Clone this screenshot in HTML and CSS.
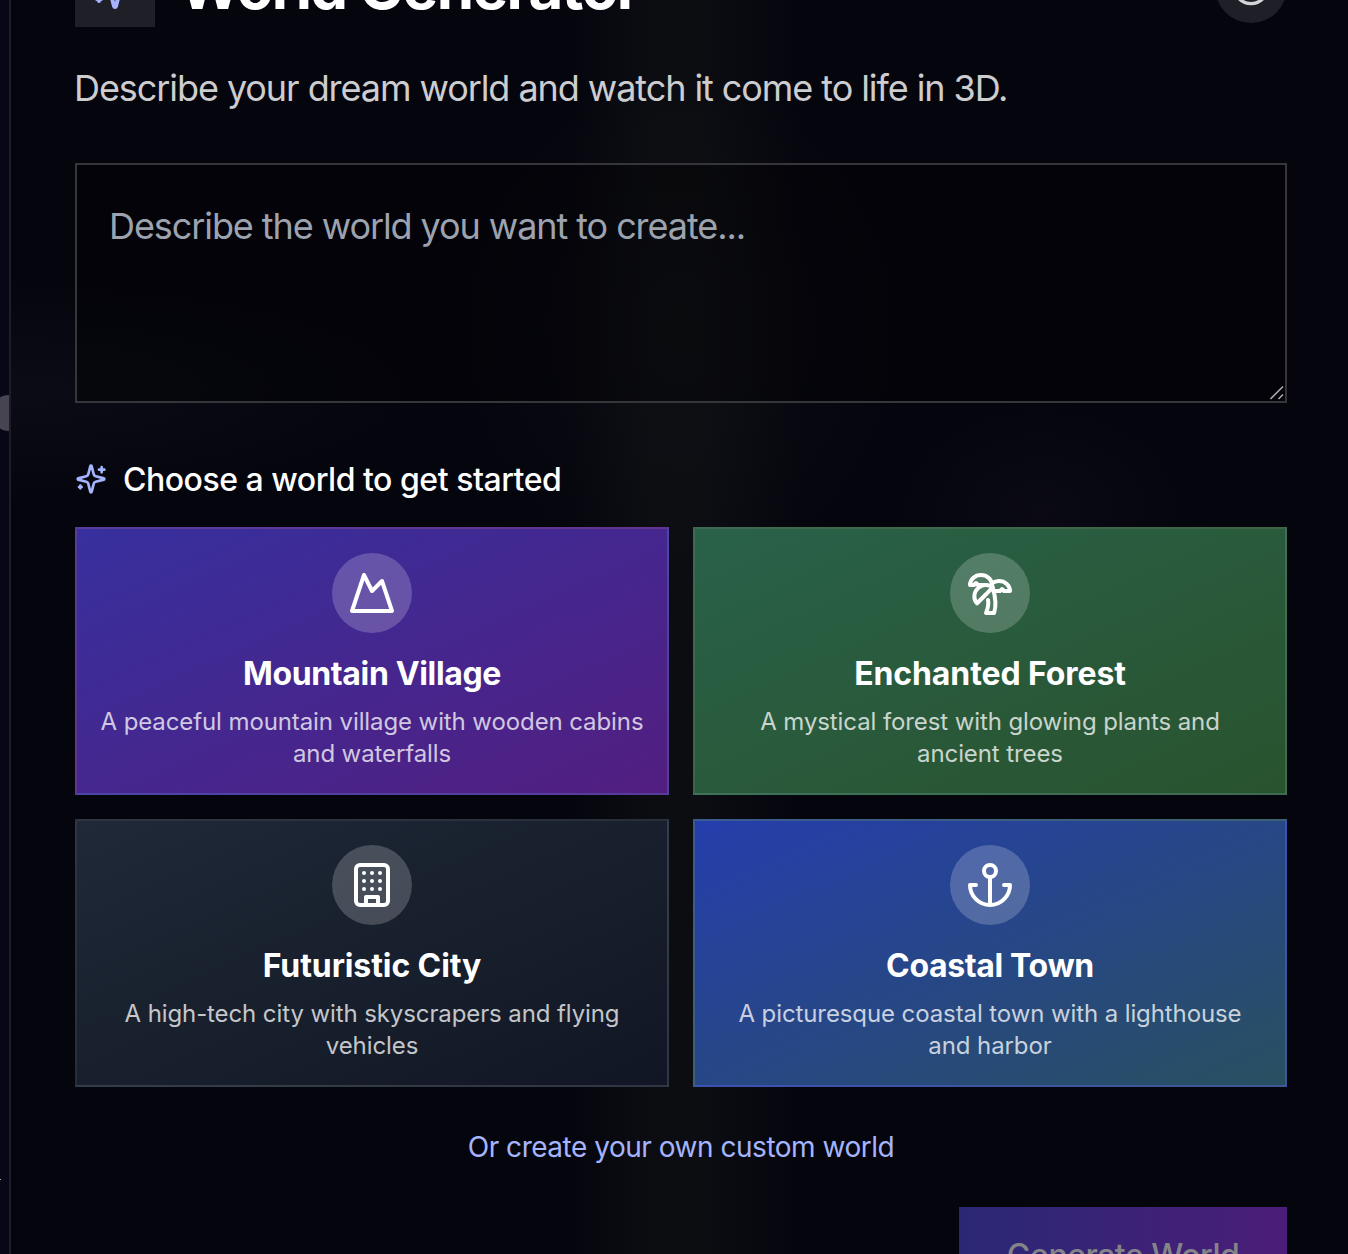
FILE: index.html
```html
<!DOCTYPE html>
<html lang="en">
<head>
<meta charset="utf-8">
<title>World Generator</title>
<link rel="stylesheet" href="styles.css">
</head>
<body>
<div class="app">
  <div class="backdrop">
    <span class="orb"></span>
    <span class="fleck"></span>
  </div>
  <main class="panel">
    <header class="header">
      <div class="logo">
        <svg class="icon" width="48" height="48" viewBox="0 0 24 24"><path d="M9.937 15.5A2 2 0 0 0 8.5 14.063l-6.135-1.582a.5.5 0 0 1 0-.962L8.5 9.936A2 2 0 0 0 9.937 8.5l1.582-6.135a.5.5 0 0 1 .963 0L14.063 8.5A2 2 0 0 0 15.5 9.937l6.135 1.581a.5.5 0 0 1 0 .964L15.5 14.063a2 2 0 0 0-1.437 1.437l-1.582 6.135a.5.5 0 0 1-.963 0z"/><path d="M20 3v4M22 5h-4M4 17v2M5 18H3"/></svg>
      </div>
      <h1 class="title">World Generator</h1>
      <button class="round-button" aria-label="Help">
        <svg class="icon" width="40" height="40" viewBox="0 0 24 24"><circle cx="12" cy="12" r="10"/><path d="M12 8v4"/></svg>
      </button>
    </header>
    <p class="intro">Describe your dream world and watch it come to life in 3D.</p>
    <div class="prompt">
      <textarea class="prompt-input" placeholder="Describe the world you want to create..."></textarea>
      <svg class="grip" width="16" height="16" viewBox="0 0 16 16"><path d="M1.5 14 14 1.5M9.5 14 14 9.5"/></svg>
    </div>
    <h2 class="subhead">
      <svg class="icon" width="32" height="32" viewBox="0 0 24 24"><path d="M9.937 15.5A2 2 0 0 0 8.5 14.063l-6.135-1.582a.5.5 0 0 1 0-.962L8.5 9.936A2 2 0 0 0 9.937 8.5l1.582-6.135a.5.5 0 0 1 .963 0L14.063 8.5A2 2 0 0 0 15.5 9.937l6.135 1.581a.5.5 0 0 1 0 .964L15.5 14.063a2 2 0 0 0-1.437 1.437l-1.582 6.135a.5.5 0 0 1-.963 0z"/><path d="M20 3v4M22 5h-4M4 17v2M5 18H3"/></svg>
      <span class="subhead-text">Choose a world to get started</span>
    </h2>
    <div class="worlds">
      <button class="card card-mountain">
        <span class="badge"><svg class="icon" width="48" height="48" viewBox="0 0 24 24"><path d="m8 3 4 8 5-5 5 15H2L8 3z"/></svg></span>
        <span class="card-title">Mountain Village</span>
        <span class="card-text">A peaceful mountain village with wooden cabins<br>and waterfalls</span>
      </button>
      <button class="card card-forest">
        <span class="badge"><svg class="icon" width="48" height="48" viewBox="0 0 24 24"><path d="M13 8c0-2.76-2.46-5-5.5-5S2 5.24 2 8h2l1-1 1 1h4"/><path d="M13 7.14A5.82 5.82 0 0 1 16.5 6c3.04 0 5.5 2.24 5.5 5h-3l-1-1-1 1h-3"/><path d="M5.89 9.71c-2.15 2.15-2.3 5.47-.35 7.43l4.24-4.25.7-.7.71-.71 2.12-2.12c-1.95-1.96-5.27-1.8-7.42.35"/><path d="M11 15.5c.5 2.5-.17 4.5-1 6.5h4c2-5.5-.5-12-1-14"/></svg></span>
        <span class="card-title">Enchanted Forest</span>
        <span class="card-text">A mystical forest with glowing plants and<br>ancient trees</span>
      </button>
      <button class="card card-city">
        <span class="badge"><svg class="icon" width="48" height="48" viewBox="0 0 24 24"><rect x="4" y="2" width="16" height="20" rx="2"/><path d="M9 22v-4h6v4M8 6h.01M16 6h.01M12 6h.01M12 10h.01M12 14h.01M16 10h.01M16 14h.01M8 10h.01M8 14h.01"/></svg></span>
        <span class="card-title">Futuristic City</span>
        <span class="card-text">A high-tech city with skyscrapers and flying<br>vehicles</span>
      </button>
      <button class="card card-coast">
        <span class="badge"><svg class="icon" width="48" height="48" viewBox="0 0 24 24"><path d="M12 22V8M5 12H2a10 10 0 0 0 20 0h-3"/><circle cx="12" cy="5" r="3"/></svg></span>
        <span class="card-title">Coastal Town</span>
        <span class="card-text">A picturesque coastal town with a lighthouse<br>and harbor</span>
      </button>
    </div>
    <a class="custom-link"><span>Or create your own custom world</span></a>
    <button class="generate"><span>Generate World</span></button>
  </main>
</div>
</body>
</html>
```
FILE: styles.css
```css
* { box-sizing: border-box; }
body {
  margin: 0;
  background: #080718;
  color: #fff;
  font-family: Inter, "Liberation Sans", sans-serif;
}
button { font: inherit; color: inherit; border: 0; }
.app {
  display: flex;
  height: 1254px;
  overflow: hidden;
}
.backdrop {
  position: relative;
  flex: 0 0 9px;
  overflow: hidden;
  background: #080718;
}
.orb {
  position: absolute;
  left: -9px;
  top: 395px;
  width: 36px;
  height: 36px;
  border-radius: 50%;
  background: #454450;
}
.fleck {
  position: absolute;
  left: 0;
  top: 1179px;
  width: 1px;
  height: 1px;
  background: #aaa;
}
.panel {
  flex: 1;
  display: flex;
  flex-direction: column;
  padding: 0 61px 0 64px;
  border-left: 2px solid #1d1d27;
  background:
    radial-gradient(ellipse 230px 260px at 670px 330px, rgba(20, 21, 26, .4), transparent),
    radial-gradient(ellipse 150px 110px at 1030px 510px, rgba(26, 24, 38, .25), transparent),
    radial-gradient(ellipse 420px 110px at 0 390px, rgba(18, 18, 30, .5), transparent),
    linear-gradient(90deg, transparent 560px, rgba(19, 21, 21, .5) 640px, rgba(19, 21, 21, .5) 690px, transparent 790px),
    #05050e;
}
.icon {
  display: block;
  fill: none;
  stroke: currentColor;
  stroke-width: 2;
  stroke-linecap: round;
  stroke-linejoin: round;
}
.header {
  display: flex;
  flex: none;
  align-items: center;
  height: 80px;
  margin-top: -53px;
}
.logo {
  display: grid;
  place-items: center;
  width: 80px;
  height: 80px;
  color: #a5b4fc;
  background: #1f1f27;
}
.title {
  flex: 1;
  margin: 0 0 0 24px;
  font-size: 60px;
  line-height: 72px;
  font-weight: 700;
  letter-spacing: -1.6px;
}
.round-button {
  display: grid;
  place-items: center;
  width: 72px;
  height: 72px;
  padding: 0;
  border-radius: 50%;
  color: #d4d4d8;
  background: #1f1f27;
}
.intro {
  margin: 33px 0 47px -1px;
  font-size: 36px;
  line-height: 56px;
  letter-spacing: -1.07px;
  color: #cdcdcf;
  white-space: nowrap;
}
.prompt {
  position: relative;
  flex: none;
  height: 240px;
}
.prompt-input {
  display: block;
  width: 100%;
  height: 100%;
  padding: 33px 32px 31px;
  border: 2px solid #36363a;
  border-radius: 0;
  outline: 0;
  resize: none;
  background: rgba(0, 0, 0, .3);
  color: #fff;
  font: 36px/56px Inter, "Liberation Sans", sans-serif;
  letter-spacing: -1.08px;
}
.prompt-input::placeholder { color: #9ca3af; }
.grip {
  position: absolute;
  right: 2px;
  bottom: 2px;
  fill: none;
  stroke: #aaa;
  stroke-width: 1.6;
}
.subhead {
  display: flex;
  flex: none;
  align-items: center;
  gap: 16px;
  height: 48px;
  margin: 52px 0 24px;
  font-size: 32px;
  line-height: 48px;
  font-weight: 500;
  letter-spacing: -.48px;
}
.subhead .icon { color: #a5b4fc; }
.subhead-text { padding-top: 2px; }
.worlds {
  display: grid;
  grid-template-columns: 1fr 1fr;
  gap: 24px;
}
.card {
  display: flex;
  flex-direction: column;
  align-items: center;
  height: 268px;
  padding: 24px 0 0;
  border: 2px solid rgba(255, 255, 255, .1);
  text-align: center;
  white-space: nowrap;
}
.card-mountain { background-image: linear-gradient(to bottom right, #37309e, #521e80); }
.card-forest { background-image: linear-gradient(to bottom right, #296149, #29532e); }
.card-city { background-image: linear-gradient(to bottom right, #1f2937, #111624); }
.card-coast { background-image: linear-gradient(to bottom right, #253eac, #285060); }
.badge {
  display: grid;
  flex: none;
  place-items: center;
  width: 80px;
  height: 80px;
  margin-bottom: 17px;
  border-radius: 50%;
  background: rgba(255, 255, 255, .2);
}
.card-title {
  margin-bottom: 8px;
  font-size: 32px;
  line-height: 48px;
  font-weight: 700;
  letter-spacing: -.35px;
}
.card-forest .card-title, .card-city .card-title { letter-spacing: -.1px; }
.card-text {
  font-size: 24px;
  line-height: 32px;
  letter-spacing: -.1px;
  color: rgba(255, 255, 255, .75);
}
.custom-link {
  margin: 40px 0;
  font-size: 28px;
  line-height: 40px;
  letter-spacing: -.48px;
  text-align: center;
  color: #a5b4fc;
}
.generate {
  flex: none;
  align-self: flex-end;
  width: 328px;
  height: 96px;
  padding: 0;
  font-size: 32px;
  font-weight: 500;
  letter-spacing: -.5px;
  white-space: nowrap;
  color: #858489;
  background: linear-gradient(90deg, #2a2876, #4b1d78);
}
```
